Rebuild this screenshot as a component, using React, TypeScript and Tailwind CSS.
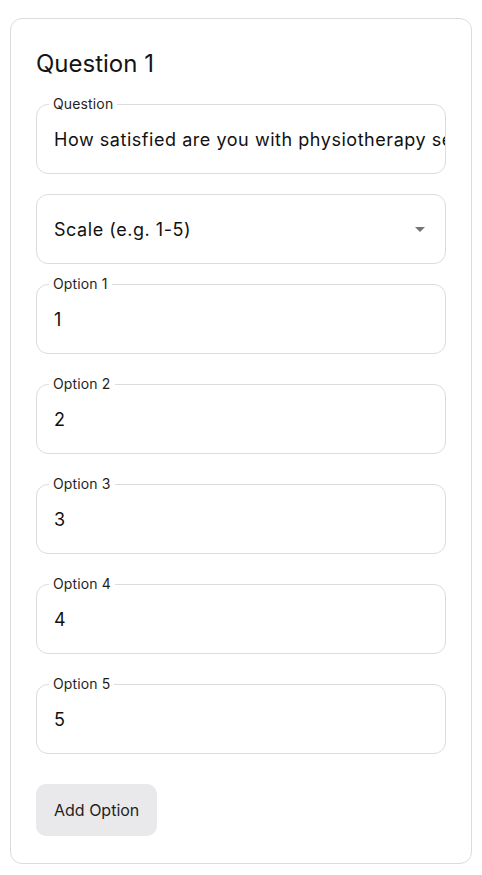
import React from 'react';

const font = { fontFamily: 'Inter, "Noto Sans", sans-serif' };

function Field({ label, value }: { label?: string; value: string }) {
  return (
    <div className="relative h-[70px] rounded-[12px] border border-[#dcdcdc] bg-white">
      {label && (
        <span className="absolute -top-[11px] left-[12px] bg-white px-[4px] text-[14px] leading-[20px] tracking-[0.01em] text-[#1f1f1f]">
          {label}
        </span>
      )}
      <div className="flex h-full items-center overflow-hidden whitespace-nowrap pl-[17px] pr-[16px] text-[18px] tracking-[0.03em] text-[#111]">
        {value}
      </div>
    </div>
  );
}

export default function App() {
  const options = ['1', '2', '3', '4', '5'];
  return (
    <div className="min-h-screen bg-white px-[10px] pt-[18px]" style={font}>
      <div className="rounded-[12px] border border-[#dcdcdc] px-[25px] pb-[27px] pt-[30px]">
        <h2 className="text-[24px] leading-[30px] text-[#141414]">Question 1</h2>

        <div className="mt-[25px] flex flex-col gap-[20px]">
          <Field label="Question" value="How satisfied are you with physiotherapy services?" />

          <div className="flex h-[70px] items-center justify-between rounded-[12px] border border-[#dcdcdc] pl-[17px] pr-[13px] text-[18px] tracking-[0.03em] text-[#111]">
            <span>Scale (e.g. 1-5)</span>
            <svg width="24" height="24" viewBox="0 0 24 24" fill="#757575">
              <path d="M7 10l5 5 5-5z" />
            </svg>
          </div>
        </div>

        <div className="mt-[20px] flex flex-col gap-[30px]">
          {options.map((o, i) => (
            <Field key={o} label={`Option ${i + 1}`} value={o} />
          ))}
        </div>

        <button className="mt-[30px] h-[52px] rounded-[10px] bg-[#e9e9eb] px-[18px] text-[16px] text-[#1f1f1f]">
          Add Option
        </button>
      </div>
    </div>
  );
}
